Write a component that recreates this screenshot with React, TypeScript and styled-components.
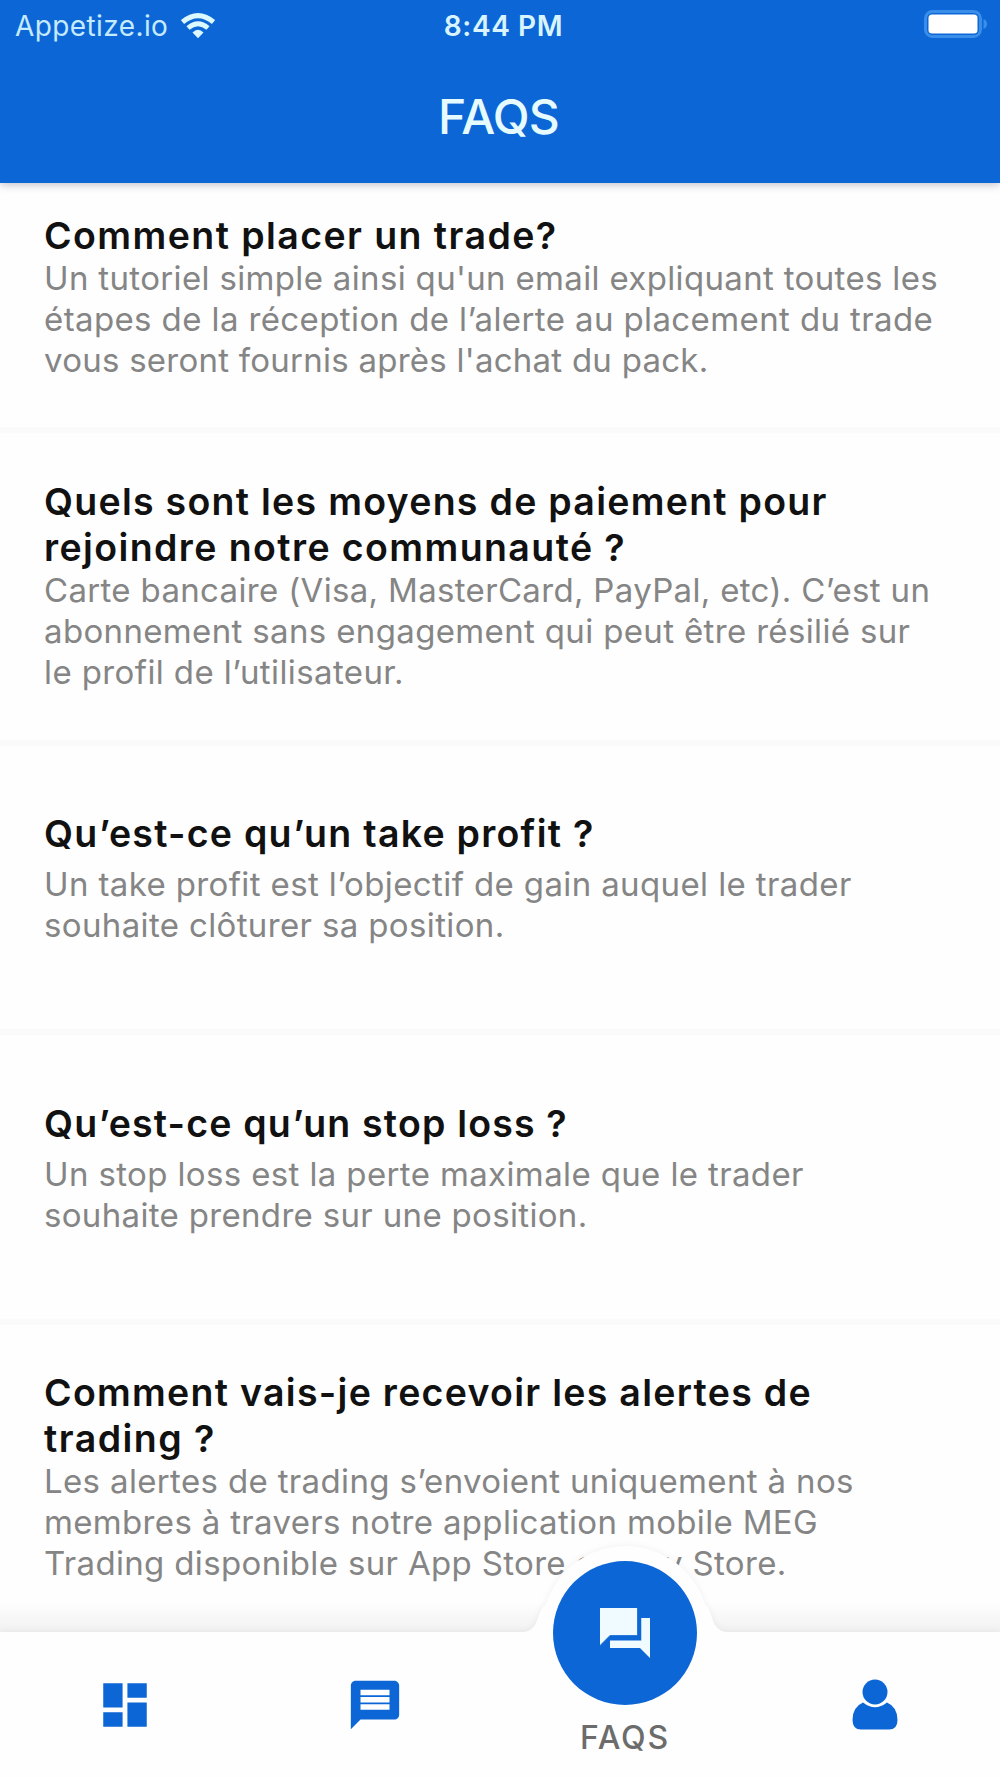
import React from "react";
import styled, { createGlobalStyle } from "styled-components";

const BLUE = "#0d66d6";

const GlobalStyle = createGlobalStyle`
  body { margin: 0; background: #fefefe; }
  * { box-sizing: border-box; }
`;

const Screen = styled.div`
  width: 1000px;
  height: 1778px;
  overflow: hidden;
  display: flex;
  flex-direction: column;
  background: #fefefe;
  font-family: Inter, "Liberation Sans", sans-serif;
`;

const Header = styled.header`
  height: 183px;
  flex: none;
  display: flex;
  flex-direction: column;
  background: ${BLUE};
  color: #e6fbff;
  box-shadow: 0 1px 9px rgba(20, 20, 60, 0.3);
  z-index: 1;
`;

const StatusBar = styled.div`
  height: 52px;
  padding: 0 12px 0 15px;
  display: grid;
  grid-template-columns: 1fr auto 1fr;
  align-items: center;
`;

const Carrier = styled.div`
  display: flex;
  align-items: center;
  gap: 13px;
  font-size: 28px;
  letter-spacing: 0.4px;
  color: #c5ebff;
`;

const Clock = styled.div`
  padding-left: 4px;
  font-size: 28px;
  font-weight: 600;
  letter-spacing: 0.6px;
  color: #d8f5ff;
`;

const BatterySlot = styled.div`
  display: flex;
  justify-content: flex-end;
  padding-bottom: 4px;
`;

const Title = styled.h1`
  flex: 1;
  margin: 0;
  padding-right: 3px;
  font-size: 48px;
  line-height: 129px;
  font-weight: 500;
  letter-spacing: -0.8px;
  text-align: center;
`;

const List = styled.main`
  flex: none;
  height: 1449px;
  overflow: hidden;
`;

const Item = styled.section<{ $height: number; $top: number }>`
  height: ${(p) => p.$height}px;
  padding: ${(p) => p.$top}px 40px 0 44px;
  border-bottom: 6px solid #fafafa;
`;

const Question = styled.h2<{ $gap: number }>`
  margin: 0 0 ${(p) => p.$gap}px;
  font-size: 37.5px;
  line-height: 46px;
  font-weight: 600;
  color: #111;
`;

const Answer = styled.p`
  margin: 0;
  font-size: 33px;
  line-height: 41px;
  color: #858585;
`;

const Line = styled.span<{ $spacing: number }>`
  display: block;
  white-space: nowrap;
  letter-spacing: ${(p) => p.$spacing}px;
`;

const TabBar = styled.nav`
  position: relative;
  height: 146px;
  flex: none;
  display: grid;
  grid-template-columns: repeat(4, 1fr);
  background: #fefefe;
`;

const Bump = styled.svg`
  position: absolute;
  left: 0;
  top: -146px;
  pointer-events: none;
`;

const BarShape = styled.path`
  fill: #fefefe;
  filter: drop-shadow(0 0 3px rgba(0, 0, 0, 0.06));
`;

const Tab = styled.button<{ $active?: boolean }>`
  position: relative;
  border: 0;
  padding: 0;
  background: none;
  font: 500 32px Inter, "Liberation Sans", sans-serif;
  letter-spacing: 1.8px;
  color: #6c6c6c;
  display: flex;
  flex-direction: column;
  align-items: center;
  justify-content: ${(p) => (p.$active ? "flex-end" : "center")};
  padding-bottom: ${(p) => (p.$active ? "21px" : "0")};
`;

const Bubble = styled.span`
  position: absolute;
  top: -71px;
  left: 53px;
  width: 144px;
  height: 144px;
  border-radius: 50%;
  background: ${BLUE};
  display: flex;
  align-items: center;
  justify-content: center;
`;

type Text = [string, number];
type Faq = { height: number; top: number; gap: number; question: Text[]; answer: Text[] };

const faqs: Faq[] = [
  {
    height: 250, top: 30, gap: -1,
    question: [["Comment placer un trade?", 1.42]],
    answer: [
      ["Un tutoriel simple ainsi qu'un email expliquant toutes les", 0.34],
      ["étapes de la réception de l’alerte au placement du trade", 0.39],
      ["vous seront fournis après l'achat du pack.", 0.25],
    ],
  },
  {
    height: 313, top: 46, gap: -1,
    question: [["Quels sont les moyens de paiement pour", 1.27], ["rejoindre notre communauté ?", 1.4]],
    answer: [
      ["Carte bancaire (Visa, MasterCard, PayPal, etc). C’est un", 0.33],
      ["abonnement sans engagement qui peut être résilié sur", 0.35],
      ["le profil de l’utilisateur.", 0.4],
    ],
  },
  {
    height: 289, top: 65, gap: 7,
    question: [["Qu’est-ce qu’un take profit ?", 1.25]],
    answer: [
      ["Un take profit est l’objectif de gain auquel le trader", 0.38],
      ["souhaite clôturer sa position.", 0.36],
    ],
  },
  {
    height: 290, top: 66, gap: 7,
    question: [["Qu’est-ce qu’un stop loss ?", 1.18]],
    answer: [
      ["Un stop loss est la perte maximale que le trader", 0.37],
      ["souhaite prendre sur une position.", 0.33],
    ],
  },
  {
    height: 330, top: 45, gap: -1,
    question: [["Comment vais-je recevoir les alertes de", 1.28], ["trading ?", 1.46]],
    answer: [
      ["Les alertes de trading s’envoient uniquement à nos", 0.35],
      ["membres à travers notre application mobile MEG", 0.335],
      ["Trading disponible sur App Store et Play Store.", 0.34],
    ],
  },
];

const lines = (items: Text[]) =>
  items.map(([text, spacing]) => (
    <Line key={text} $spacing={spacing}>{text}</Line>
  ));

const Wifi = () => (
  <svg width="34" height="26" viewBox="0 0 34 26" fill="none" stroke="#dcf8ff">
    <path d="M1.500 9 Q17 -3.800 32.500 9" strokeWidth="5" />
    <path d="M7 15 Q17 6.600 27 15" strokeWidth="4.800" />
    <path d="M11.500 19.500 Q17 14.200 22.500 19.500 L17 25.200 Z" fill="#dcf8ff" stroke="none" />
  </svg>
);

const Battery = () => (
  <svg width="64" height="28" viewBox="0 0 64 28">
    <rect x="1.5" y="1.5" width="55" height="25" rx="7" fill="none" stroke="#388ee9" strokeWidth="3" />
    <rect x="4.500" y="4.500" width="49" height="19" rx="3.500" fill="#fff" />
    <path d="M59.500 9 Q63 10 63 14 Q63 18 59.500 19 Z" fill="#388ee9" />
  </svg>
);

export default function App() {
  return (
    <Screen>
      <GlobalStyle />
      <Header>
        <StatusBar>
          <Carrier>Appetize.io <Wifi /></Carrier>
          <Clock>8:44 PM</Clock>
          <BatterySlot><Battery /></BatterySlot>
        </StatusBar>
        <Title>FAQS</Title>
      </Header>
      <List>
        {faqs.map((faq) => (
          <Item key={faq.question[0][0]} $height={faq.height} $top={faq.top}>
            <Question $gap={faq.gap}>{lines(faq.question)}</Question>
            <Answer>{lines(faq.answer)}</Answer>
          </Item>
        ))}
      </List>
      <TabBar>
        <Bump width="1000" height="292" viewBox="0 0 1000 292">
          <defs>
            <linearGradient id="edge" x1="0" y1="0" x2="0" y2="1">
              <stop offset="0" stopColor="#000" stopOpacity="0" />
              <stop offset="1" stopColor="#000" stopOpacity="0.05" />
            </linearGradient>
          </defs>
          <rect y="116" width="1000" height="30" fill="url(#edge)" />
          <BarShape d="M0 146H524Q534 145 538 132Q541 121 546 118A83.500 83.500 0 0 1 705 118Q709 121 712 132Q716 145 726 146H1000V292H0Z" />
        </Bump>
        <Tab aria-label="Dashboard">
          <svg width="58" height="58" viewBox="0 0 24 24" fill={BLUE}>
            <path d="M3 13h8V3H3v10zm0 8h8v-6H3v6zm10 0h8V11h-8v10zm0-18v6h8V3h-8z" />
          </svg>
        </Tab>
        <Tab aria-label="Messages">
          <svg width="58" height="58" viewBox="0 0 24 24" fill={BLUE}>
            <path d="M20 2H4c-1.100 0-1.990.9-1.990 2L2 22l4-4h14c1.100 0 2-.9 2-2V4c0-1.100-.9-2-2-2zm-2 12H6v-2.300h12v2.300zm0-3H6V8.700h12v2.300zm0-3H6V5.700h12v2.300z" />
          </svg>
        </Tab>
        <Tab $active>
          <Bubble>
            <svg width="60" height="60" viewBox="0 0 24 24" fill="#effbff">
              <path d="M22 6h-3.500v9H6v3h12l4 4V6zM17 2H2v15l4-4h11z" />
              <path d="M17 2v11H6l-4 4" fill="none" stroke={BLUE} strokeWidth="0.300" />
            </svg>
          </Bubble>
          FAQS
        </Tab>
        <Tab aria-label="Profile">
          <svg width="46" height="52" viewBox="0 0 46 52" fill={BLUE}>
            <circle cx="23" cy="13" r="12.500" />
            <path d="M11 23.500Q23 33 35 23.500Q45.500 28 45.500 41Q45.500 50.500 37 50.500H9Q0.500 50.500 0.500 41Q0.500 28 11 23.500Z" />
          </svg>
        </Tab>
      </TabBar>
    </Screen>
  );
}
